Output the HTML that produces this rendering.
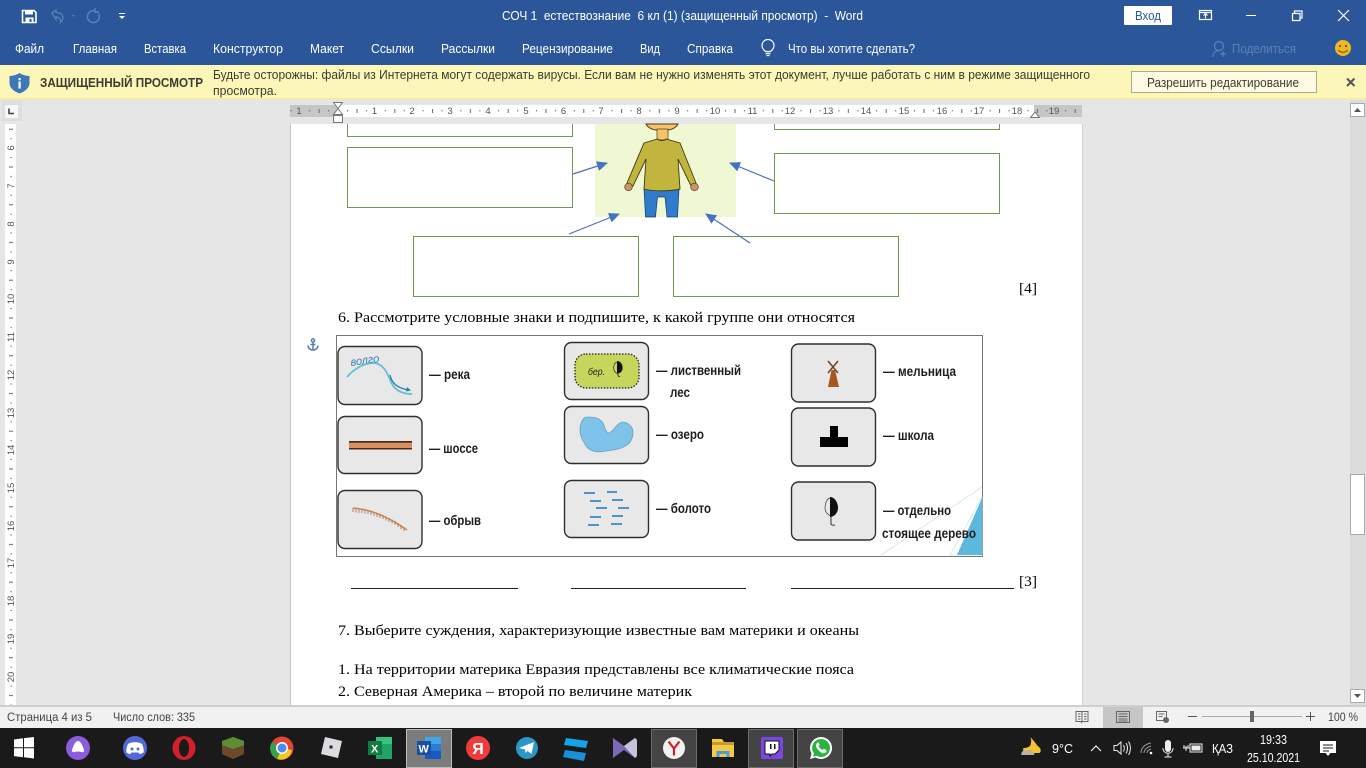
<!DOCTYPE html>
<html lang="ru"><head><meta charset="utf-8"><title>Word</title>
<style>
html,body{margin:0;padding:0;width:1366px;height:768px;overflow:hidden;background:#e6e6e6}
svg{display:block;font-family:"Liberation Sans",sans-serif}
.u{font-size:12.5px;fill:#fff}
.s{font-family:"Liberation Serif",serif;font-size:15px;fill:#000}
.y{font-size:12.5px;fill:#3c3c30}
.r{font-size:9.5px;fill:#555;text-anchor:middle}
.b{font-size:14px;font-weight:bold;fill:#1d1d1d}
.st{font-size:11.5px;fill:#444}
.w{font-size:12.5px;fill:#fff}
.box{fill:#e8e8e8;stroke:#2f2f2f;stroke-width:1.4}
.g{fill:#fff;stroke:#6f9a4b;stroke-width:1}
.ic{fill:none;stroke:#fff;stroke-width:1.2}
</style></head><body>
<svg width="1366" height="768" viewBox="0 0 1366 768" xmlns="http://www.w3.org/2000/svg">
<defs>
<pattern id="hp" width="37.8" height="12" patternUnits="userSpaceOnUse" patternTransform="translate(338 105)">
<rect x="9" y="5" width="1" height="1.4" fill="#666"/><rect x="18.5" y="4" width="1" height="4" fill="#666"/><rect x="28" y="5" width="1" height="1.4" fill="#666"/>
</pattern>
<pattern id="vp" width="12" height="37.75" patternUnits="userSpaceOnUse" patternTransform="translate(5 148)">
<rect x="5.5" y="9" width="1.4" height="1" fill="#666"/><rect x="4" y="18.5" width="4" height="1" fill="#666"/><rect x="5.5" y="28" width="1.4" height="1" fill="#666"/>
</pattern>
<marker id="ah" markerWidth="12" markerHeight="10" refX="10" refY="5" orient="auto" markerUnits="userSpaceOnUse"><path d="M0 0L11 5L0 10Z" fill="#4472c4"/></marker>
</defs>

<!-- chrome -->
<rect width="1366" height="65" fill="#2b579a"/>
<rect y="65" width="1366" height="35" fill="#fcf7b8"/>
<rect y="98.5" width="1366" height="1" fill="#e6dfa9"/>
<rect y="100" width="1366" height="607" fill="#e6e6e6"/>

<!-- quick access -->
<path d="M22.5 10.5h11.5l2 2v10h-13.5z" fill="none" stroke="#fff" stroke-width="1.6"/><rect x="25" y="10.5" width="8" height="4" fill="#fff"/><rect x="25.5" y="17.5" width="8" height="5" fill="#fff"/><rect x="29.5" y="19" width="2" height="3" fill="#2b579a"/>
<path d="M52 13l4-3v2.5c4 0 7 2 7 5 0 2-1 3.5-2.5 5 .6-3-1-5.5-4.500-5.500v2.500z" fill="none" stroke="#5f80b4" stroke-width="1.3"/>
<path d="M72 15l3 0-1.5 2z" fill="#5f80b4"/>
<path d="M98.5 13.500a6 6 0 1 1-3-2.500M95 8v4h4" fill="none" stroke="#5f80b4" stroke-width="1.5"/>
<rect x="119" y="13" width="6" height="1" fill="#fff"/><path d="M119 16h6l-3 3z" fill="#fff"/>

<text x="502" y="20" class="u" style="white-space:pre" textLength="361" lengthAdjust="spacingAndGlyphs">СОЧ 1  естествознание  6 кл (1) (защищенный просмотр)  -  Word</text>
<rect x="1124" y="6" width="48" height="19" rx="1" fill="#fff"/>
<text x="1135" y="20" class="u" style="fill:#2b579a" textLength="26" lengthAdjust="spacingAndGlyphs">Вход</text>
<rect x="1199.5" y="10.5" width="12" height="9" class="ic"/><path d="M1199.5 12.5h12M1205.5 18.5v-5M1203.5 15.5l2-2 2 2" class="ic" stroke-width="1"/>
<rect x="1246" y="15" width="10" height="1" fill="#fff"/>
<path d="M1292.5 13.5h7.5v7h-7.5zM1294.5 13.5v-2.5h7.5v7h-2" class="ic"/>
<path d="M1338 10l11 11M1349 10l-11 11" class="ic" stroke-width="1.3"/>

<!-- tabs -->
<text x="15" y="53" class="u" textLength="29" lengthAdjust="spacingAndGlyphs">Файл</text>
<text x="73" y="53" class="u" textLength="44" lengthAdjust="spacingAndGlyphs">Главная</text>
<text x="144" y="53" class="u" textLength="42" lengthAdjust="spacingAndGlyphs">Вставка</text>
<text x="213" y="53" class="u" textLength="70" lengthAdjust="spacingAndGlyphs">Конструктор</text>
<text x="310" y="53" class="u" textLength="34" lengthAdjust="spacingAndGlyphs">Макет</text>
<text x="371" y="53" class="u" textLength="43" lengthAdjust="spacingAndGlyphs">Ссылки</text>
<text x="441" y="53" class="u" textLength="54" lengthAdjust="spacingAndGlyphs">Рассылки</text>
<text x="522" y="53" class="u" textLength="91" lengthAdjust="spacingAndGlyphs">Рецензирование</text>
<text x="640" y="53" class="u" textLength="20" lengthAdjust="spacingAndGlyphs">Вид</text>
<text x="687" y="53" class="u" textLength="46" lengthAdjust="spacingAndGlyphs">Справка</text>
<path d="M765.5 51.5c-2.500-2-3.500-4-3.500-6a6 6 0 0 1 12 0c0 2-1 4-3.500 6zM765.5 53.500h5M766.5 55.500h3" fill="none" stroke="#fff" stroke-width="1.2"/>
<text x="788" y="53" class="u" textLength="127" lengthAdjust="spacingAndGlyphs">Что вы хотите сделать?</text>
<g fill="none" stroke="#5f80b4" stroke-width="1.2"><circle cx="1219" cy="46" r="4.5"/><path d="M1212.5 57c.5-4 3-6 6-6.5M1220 54h6M1223 51v6"/></g>
<text x="1232" y="53" class="u" style="fill:#5f80b4" textLength="64" lengthAdjust="spacingAndGlyphs">Поделиться</text>
<circle cx="1343" cy="48" r="8" fill="#eeb91f"/><circle cx="1340" cy="46" r="1.1" fill="#6b4f0a"/><circle cx="1346" cy="46" r="1.1" fill="#6b4f0a"/><path d="M1338.5 50c1.5 3 7.5 3 9 0" fill="none" stroke="#6b4f0a"/>

<!-- protected view bar -->
<path d="M19.5 73c3 2 6 2.8 10 3v7c0 5-4.5 8.5-10 10.5-5.5-2-10-5.5-10-10.5v-7c4-.2 7-1 10-3z" fill="#3f78b8"/>
<rect x="18.5" y="78" width="2.2" height="2.2" fill="#fff"/><rect x="18.5" y="81.5" width="2.2" height="7" fill="#fff"/>
<text x="40" y="87" class="y" style="font-weight:bold" textLength="163" lengthAdjust="spacingAndGlyphs">ЗАЩИЩЕННЫЙ ПРОСМОТР</text>
<text x="213" y="79" class="y" textLength="877" lengthAdjust="spacingAndGlyphs">Будьте осторожны: файлы из Интернета могут содержать вирусы. Если вам не нужно изменять этот документ, лучше работать с ним в режиме защищенного</text>
<text x="213" y="95" class="y" textLength="64" lengthAdjust="spacingAndGlyphs">просмотра.</text>
<rect x="1131.5" y="71.5" width="185" height="21" fill="#fdfbe2" stroke="#b0ab86"/>
<text x="1147" y="87" class="y" textLength="152" lengthAdjust="spacingAndGlyphs">Разрешить редактирование</text>
<path d="M1347 78.5l7.500 7.500M1354.500 78.500l-7.500 7.500" fill="none" stroke="#555" stroke-width="2"/>

<!-- rulers -->
<rect x="2" y="100" width="20" height="21" fill="#dedede"/>
<rect x="5" y="105" width="13" height="13" fill="#f7f7f7"/><path d="M9 108.5v5h5" fill="none" stroke="#444" stroke-width="1.6"/>
<rect x="290" y="105" width="792" height="12" fill="#fff"/>
<rect x="290" y="105" width="48" height="12" fill="#c6c6c6"/>
<rect x="1034" y="105" width="48" height="12" fill="#c6c6c6"/>
<rect x="290" y="105" width="792" height="12" fill="url(#hp)"/>
<g>
<text x="299" y="114" class="r">1</text><text x="374.5" y="114" class="r">1</text><text x="412" y="114" class="r">2</text><text x="450" y="114" class="r">3</text><text x="488" y="114" class="r">4</text><text x="526" y="114" class="r">5</text><text x="563.5" y="114" class="r">6</text><text x="601" y="114" class="r">7</text><text x="639" y="114" class="r">8</text><text x="677" y="114" class="r">9</text><text x="715" y="114" class="r">10</text><text x="752.5" y="114" class="r">11</text><text x="790" y="114" class="r">12</text><text x="828" y="114" class="r">13</text><text x="866" y="114" class="r">14</text><text x="904" y="114" class="r">15</text><text x="942" y="114" class="r">16</text><text x="979" y="114" class="r">17</text><text x="1017" y="114" class="r">18</text><text x="1054" y="114" class="r">19</text>
</g>
<path d="M333.5 102.5h9l-4.5 6 4.5 6h-9l4.5-6z" fill="#fff" stroke="#777"/>
<rect x="333.5" y="115.5" width="9" height="7" fill="#fff" stroke="#777"/>
<path d="M1030.5 117.5l4.5-5.5 4.5 5.5z" fill="#fff" stroke="#777"/>

<rect x="5" y="124" width="11" height="582" fill="#fff"/>
<rect x="5" y="124" width="11" height="582" fill="url(#vp)"/>
<g font-size="9.5" fill="#555" text-anchor="middle">
<text transform="translate(14 148) rotate(-90)">6</text><text transform="translate(14 186) rotate(-90)">7</text><text transform="translate(14 224) rotate(-90)">8</text><text transform="translate(14 262) rotate(-90)">9</text><text transform="translate(14 299) rotate(-90)">10</text><text transform="translate(14 337) rotate(-90)">11</text><text transform="translate(14 375) rotate(-90)">12</text><text transform="translate(14 413) rotate(-90)">13</text><text transform="translate(14 450) rotate(-90)">14</text><text transform="translate(14 488) rotate(-90)">15</text><text transform="translate(14 526) rotate(-90)">16</text><text transform="translate(14 563) rotate(-90)">17</text><text transform="translate(14 601) rotate(-90)">18</text><text transform="translate(14 639) rotate(-90)">19</text><text transform="translate(14 677) rotate(-90)">20</text>
</g>

<!-- page -->
<rect x="290" y="124" width="1" height="583" fill="#c4c4c4"/>
<rect x="291" y="124" width="791" height="583" fill="#fff"/>
<rect x="1082" y="124" width="1" height="583" fill="#d0d0d0"/>

<!-- figure -->
<path d="M347.5 124v12.5h225V124" fill="none" stroke="#6f9a4b"/>
<rect x="347.5" y="147.5" width="225" height="60" class="g"/>
<path d="M774.5 124v5.5h225V124" fill="none" stroke="#6f9a4b"/>
<rect x="774.5" y="153.5" width="225" height="60" class="g"/>
<rect x="413.5" y="236.5" width="225" height="60" class="g"/>
<rect x="673.5" y="236.5" width="225" height="60" class="g"/>
<rect x="595" y="124" width="141" height="93" fill="#eff8d2"/>
<path d="M646 124c2 4 7 6.5 16 6.5s14-2.5 16-6.5z" fill="#f6c36c" stroke="#4a3a1a"/>
<rect x="657" y="129" width="11" height="11" fill="#f6c36c" stroke="#4a3a1a" stroke-width=".7"/>
<path d="M644 189h35l-1.5 28h-10.500l-2-20h-7.500l-2 20h-10z" fill="#2f7ccd" stroke="#1d3b66" stroke-width=".7"/>
<path d="M657.5 139l-13.500 4-17 40 6 3 13-27-2 30c10 2.500 25 2.500 36 0l-2-30 13 27 5-3-16-40-14-4c-2 2-6 2-8.500 0z" fill="#c2b53e" stroke="#3c3a18" stroke-width=".9"/>
<circle cx="628.5" cy="187" r="3.8" fill="#c6966a" stroke="#4a3a1a" stroke-width=".7"/>
<circle cx="694.5" cy="187" r="3.8" fill="#c6966a" stroke="#4a3a1a" stroke-width=".7"/>
<g stroke="#4a70b8" stroke-width="1.2" fill="none">
<path d="M573 174L607 163" marker-end="url(#ah)"/>
<path d="M774 181L730 163" marker-end="url(#ah)"/>
<path d="M569 234L619 214" marker-end="url(#ah)"/>
<path d="M750 243L706 214" marker-end="url(#ah)"/>
</g>

<!-- document text -->
<text x="1019" y="293" class="s" textLength="18" lengthAdjust="spacingAndGlyphs">[4]</text>
<text x="338" y="322" class="s" textLength="517" lengthAdjust="spacingAndGlyphs">6. Рассмотрите условные знаки и подпишите, к какой группе они относятся</text>

<!-- anchor -->
<g fill="none" stroke="#4f7db5" stroke-width="1.5"><circle cx="313" cy="340.5" r="1.6"/><path d="M313 342.5v7.5M310.5 344.5h5M308 345.5c.3 3 2.5 4.5 5 4.5s4.7-1.5 5-4.5"/></g>

<!-- legend image -->
<rect x="336.5" y="335.5" width="646" height="221" fill="#fff" stroke="#777"/>
<path d="M881 555L982 487M982 497L950 555H982Z" fill="none" stroke="#d5e4e4" stroke-width=".8"/>
<path d="M982 498L957 555H982Z" fill="#5cb9dd"/>

<rect x="338" y="346.5" width="84" height="58" rx="7" class="box"/>
<rect x="338" y="416.5" width="84" height="57" rx="7" class="box"/>
<rect x="338" y="490.5" width="84" height="58" rx="7" class="box"/>
<rect x="564.5" y="342.5" width="84" height="57" rx="7" class="box"/>
<rect x="564.5" y="406.5" width="84" height="57" rx="7" class="box"/>
<rect x="564.5" y="480.5" width="84" height="57" rx="7" class="box"/>
<rect x="791.5" y="344" width="84" height="58" rx="7" class="box"/>
<rect x="791.5" y="408" width="84" height="58" rx="7" class="box"/>
<rect x="791.5" y="482" width="84" height="58" rx="7" class="box"/>

<!-- river -->
<path d="M347 377C353 370 363 363 373 363C383 363 387 372 391 382C395 391 403 394 412 394" fill="none" stroke="#62bdd8" stroke-width="1.8"/>
<path d="M390 375C392 384 398 388 408 390" fill="none" stroke="#2a7fa8" stroke-width="1.4"/><path d="M407 387l4 3.500-5 1z" fill="#2a7fa8"/>
<text transform="translate(351 366) rotate(-8)" font-size="11.5" font-style="italic" fill="#3d7fb5" textLength="29" lengthAdjust="spacingAndGlyphs">волго</text>
<!-- road -->
<rect x="349" y="442" width="63" height="7" fill="#d99060"/>
<rect x="349" y="441" width="63" height="1.7" fill="#4a2a18"/><rect x="349" y="448" width="63" height="1.5" fill="#4a2a18"/>
<!-- cliff -->
<path d="M353 508c15 1 33 7 54 22" fill="none" stroke="#d08a5c" stroke-width="1.5"/>
<path d="M353 508v4M356 508.5v4M359 509v4M362 509v4M365 509.500v4M368 510v4M371 511v4M374 512v4M377 513v4M380 514v4M383 515v4M386 516.500v4M389 518v4M392 519.500v4M395 521v4M398 523v4M401 525v4M404 527v4" stroke="#a06a48" stroke-width=".8"/>
<!-- forest -->
<rect x="575" y="354" width="64" height="34" rx="11" fill="#c6d65c" stroke="#222" stroke-width="1.3" stroke-dasharray="1.5 1.5"/>
<text x="588" y="375" font-size="10" font-style="italic" fill="#222" textLength="17" lengthAdjust="spacingAndGlyphs">бер.</text>
<path d="M617 362c-3 1-4 5-3 8 .5 2 2 3 3.500 3.500" fill="none" stroke="#333" stroke-width=".7"/><path d="M617 361c4 0 6 4 5.500 8-.4 3-3 4.500-5.500 4.500z" fill="#111"/><path d="M618 373v2c0 1 1 1.500 2 1.500" fill="none" stroke="#333"/>
<!-- lake -->
<path d="M580 430C580 423 583 417 587 417C594 417 600 418 603 423C605 428 606 433 609 433C613 432 617 423 622 422C628 422 633 427 633 432C633 438 631 442 627 445C622 449 614 450 606 451C597 453 590 451 586 446C583 441 580 436 580 430Z" fill="#7ec3ea" stroke="#6f9fb8" stroke-width=".8"/>
<!-- swamp -->
<g stroke="#3d86c2" stroke-width="1.8"><path d="M584 493h11M607 492h10M590 501h11M612 500h11M596 508h11M618 508h11M590 517h11M612 516h11M588 525h11M611 524h11"/></g>
<!-- mill -->
<path d="M828 387l3.500-17h3.500l4 17z" fill="#a8561f"/><path d="M828 361l10 12M838 361l-10 12" stroke="#6b4426" stroke-width="1.5"/>
<!-- school -->
<path d="M830 426h8v11h10v10h-28v-10h10z" fill="#000"/>
<!-- tree -->
<path d="M830 498c-3.500 1-5 6-5 10 0 4 3 7 6 8" fill="none" stroke="#333" stroke-width=".7"/><path d="M830 497c5 0 8 6 8 11 0 5-4 9-8 9z" fill="#111"/><path d="M831 517v7c0 1 2 1.500 4 1" fill="none" stroke="#333"/>

<text x="429" y="379" class="b" textLength="41" lengthAdjust="spacingAndGlyphs">— река</text>
<text x="429" y="453" class="b" textLength="49" lengthAdjust="spacingAndGlyphs">— шоссе</text>
<text x="429" y="525" class="b" textLength="52" lengthAdjust="spacingAndGlyphs">— обрыв</text>
<text x="656" y="375" class="b" textLength="85" lengthAdjust="spacingAndGlyphs">— лиственный</text>
<text x="670" y="397" class="b" textLength="20" lengthAdjust="spacingAndGlyphs">лес</text>
<text x="656" y="439" class="b" textLength="48" lengthAdjust="spacingAndGlyphs">— озеро</text>
<text x="656" y="513" class="b" textLength="55" lengthAdjust="spacingAndGlyphs">— болото</text>
<text x="883" y="376" class="b" textLength="73" lengthAdjust="spacingAndGlyphs">— мельница</text>
<text x="883" y="440" class="b" textLength="51" lengthAdjust="spacingAndGlyphs">— школа</text>
<text x="883" y="515" class="b" textLength="68" lengthAdjust="spacingAndGlyphs">— отдельно</text>
<text x="882" y="538" class="b" textLength="94" lengthAdjust="spacingAndGlyphs">стоящее дерево</text>

<rect x="351" y="588" width="167" height="1" fill="#222"/>
<rect x="571" y="588" width="175" height="1" fill="#222"/>
<rect x="791" y="588" width="223" height="1" fill="#222"/>
<text x="1019" y="586" class="s" textLength="18" lengthAdjust="spacingAndGlyphs">[3]</text>
<text x="338" y="635" class="s" textLength="521" lengthAdjust="spacingAndGlyphs">7. Выберите суждения, характеризующие известные вам материки и океаны</text>
<text x="338" y="674" class="s" textLength="516" lengthAdjust="spacingAndGlyphs">1. На территории материка Евразия представлены все климатические пояса</text>
<text x="338" y="696" class="s" textLength="354" lengthAdjust="spacingAndGlyphs">2. Северная Америка – второй по величине материк</text>

<!-- scrollbar -->
<rect x="1350" y="100" width="16" height="607" fill="#dcdcdc"/>
<rect x="1350.5" y="103.5" width="14" height="13" fill="#fff" stroke="#aaa"/><path d="M1354 112l3.5-4 3.5 4z" fill="#555"/>
<rect x="1350.5" y="474.5" width="14" height="60" fill="#fff" stroke="#aaa"/>
<rect x="1350.5" y="689.5" width="14" height="13" fill="#fff" stroke="#aaa"/><path d="M1354 694l3.5 4 3.5-4z" fill="#555"/>

<!-- status -->
<rect y="705" width="1366" height="2" fill="#cfcfcf"/>
<rect y="707" width="1366" height="21" fill="#f1f1f1"/>
<text x="7" y="721" class="st" textLength="85" lengthAdjust="spacingAndGlyphs">Страница 4 из 5</text>
<text x="113" y="721" class="st" textLength="82" lengthAdjust="spacingAndGlyphs">Число слов: 335</text>
<path d="M1076 711.5h5.5l.5 1 .5-1h5.5v10h-6l-.5 1-.5-1h-5zM1082 712.5v9M1078 714h2.5M1078 716.5h2.5M1078 719h2.5M1084 714h2.5M1084 716.5h2.5M1084 719h2.5" fill="none" stroke="#666"/>
<rect x="1103" y="707" width="40" height="21" fill="#c6c6c6"/>
<path d="M1116.5 711.5h13v11h-13zM1118.5 714h9M1118.5 716.5h9M1118.5 719h9M1118.5 721h9" fill="none" stroke="#666"/>
<path d="M1156.5 711.5h10v9h-10zM1158.5 714h6M1158.5 716.5h4" fill="none" stroke="#666"/><circle cx="1166" cy="720" r="3" fill="#666"/>
<rect x="1188" y="716" width="9" height="1" fill="#555"/>
<rect x="1202" y="716" width="100" height="1" fill="#aaa"/>
<rect x="1250" y="711" width="4" height="11" fill="#666"/>
<path d="M1306 716.5h9M1310.5 712v9" stroke="#555"/>
<text x="1328" y="721" class="st" textLength="30" lengthAdjust="spacingAndGlyphs">100 %</text>

<!-- taskbar -->
<rect y="728" width="1366" height="40" fill="#1a1a1a"/>
<path d="M14 739.5l9-1.200v9h-9zM24 738.100l10-1.100v10.300H24zM14 748.300h9v9l-9-1.200zM24 748.300h10V758.500l-10-1.300z" fill="#fff"/>
<circle cx="78" cy="748" r="12" fill="#8b5ddb"/><path d="M78 741c3 0 5 6 6 9 .5 2-1.500 2.500-3 2-2-.6-4-.6-6 0-1.500.5-3.500 0-3-2 1-3 3-9 6-9z" fill="#fff"/>
<circle cx="135" cy="748" r="12" fill="#5468d8"/><path d="M128 744c4-2.500 10-2.500 14 0 1.500 3 2 6 1.500 8.500-1.500 1-3 1.500-4 1.500l-1-1.500h-7l-1 1.500c-1 0-2.500-.5-4-1.500-.5-2.500 0-5.500 1.500-8.500z" fill="#fff"/><circle cx="132" cy="749" r="1.500" fill="#5468d8"/><circle cx="138" cy="749" r="1.500" fill="#5468d8"/>
<ellipse cx="184" cy="748" rx="11.5" ry="12" fill="#d11f2c"/><ellipse cx="184" cy="748" rx="5" ry="9" fill="#1a1a1a"/>
<path d="M233 737l11 4v13l-11 5-11-5v-13z" fill="#6b4a2c"/><path d="M233 737l11 4v4l-11 4-11-4v-4z" fill="#5c8f35"/>
<circle cx="282" cy="748" r="11.5" fill="#dd4535"/><path d="M282 748l10 2a11 11 0 0 1-15 9z" fill="#f6c520"/><path d="M272 742a11.500 11.500 0 0 0 5 17l5-11z" fill="#37a04c"/><circle cx="282" cy="748" r="6" fill="#fff"/><circle cx="282" cy="748" r="4.500" fill="#4d8bf0"/>
<path d="M325 737l17 4-4 17-17-4z" fill="#dadce0"/><rect x="329.500" y="745.500" width="3" height="3" fill="#222"/>
<rect x="376" y="737" width="16" height="22" fill="#21a366"/><rect x="376" y="737" width="16" height="7" fill="#33c481"/><rect x="368" y="741" width="14" height="14" fill="#107c41"/>
<text x="371" y="752.500" font-size="11" font-weight="bold" fill="#fff">X</text>
<rect x="406.5" y="729.5" width="45" height="38" fill="#7c7c7c" stroke="#bdbdbd"/>
<rect x="425" y="737" width="16" height="22" fill="#185abd"/><rect x="425" y="737" width="16" height="7" fill="#41a5ee"/><rect x="425" y="744" width="16" height="7" fill="#2b7cd3"/><rect x="417" y="741" width="14" height="14" fill="#1a4fa8"/>
<text x="418.5" y="752.5" font-size="11" font-weight="bold" fill="#fff">W</text>
<circle cx="478" cy="748" r="12" fill="#f03b3b"/><text x="478" y="754" font-size="16" font-weight="bold" fill="#fff" text-anchor="middle">Я</text>
<circle cx="527" cy="748" r="11" fill="#2b97c9"/><path d="M519 748l15-6-2.500 12-4-3-2 2-.5-3.500z" fill="#fff"/>
<path d="M566 738l22 3-2 7-22-3z" fill="#12a4e6"/><path d="M565 750l21 3-2 8-21-4z" fill="#1a8fd8"/>
<path d="M613 738l11 8 11-8 2 2v16l-2 2-11-8-11 8z" fill="#7a6ab8"/><path d="M624 746l11-8 2 2v16l-2 2z" fill="#c6c2de"/>
<rect x="651.5" y="729.5" width="45" height="38" fill="#444" stroke="#6c6c6c"/>
<circle cx="674" cy="748" r="11" fill="#f2f2f2"/><path d="M668.500 741.500l5.500 7 5.500-7M674 748.500v7" fill="none" stroke="#c8202c" stroke-width="2.2"/>
<path d="M712 739h10l2 3h10v15h-22z" fill="#f3c94a"/><rect x="712" y="742" width="22" height="3" fill="#c79a2e"/><path d="M716.500 757v-6h13v6h-3v-3h-7v3z" fill="#4a9bd8"/>
<rect x="748.5" y="729.5" width="45" height="38" fill="#444" stroke="#6c6c6c"/>
<rect x="761" y="737" width="22" height="22" rx="2" fill="#7c46e0"/><path d="M765 741h14v9l-4 4h-3l-2 2v-2h-5z" fill="#fff" stroke="#111"/><rect x="770" y="744" width="1.5" height="5" fill="#111"/><rect x="774" y="744" width="1.5" height="5" fill="#111"/>
<rect x="797.5" y="729.5" width="45" height="38" fill="#444" stroke="#6c6c6c"/>
<path d="M821 737a11 11 0 1 1-5.500 20.500L810 759l1.500-5.500A11 11 0 0 1 821 737z" fill="#fff"/><path d="M821 739a9 9 0 1 1-4.500 16.800l-3.500 1 1-3.300A9 9 0 0 1 821 739z" fill="#2ab340"/><path d="M817 743c-1 1-1.500 2.500-.5 4.500 1 2 3.500 4.500 5.500 5.500 2 .8 3.500 0 4.500-1.500l-.2-1.500-2.500-1.300-1.200 1.300c-1.500-.5-3.500-2.500-4-4l1-1.200-1.200-2.500z" fill="#fff"/>

<!-- tray -->
<path d="M1030 737c4 3 6 8 10 11 1 2 1 4-.5 5h-13c-3-1-4-3-3-5 3 0 6-1 7-3 1-3 1-6-.5-8z" fill="#f4c430"/>
<path d="M1022 752c1-2 3-2 4-1 2-2 6-1 6 1 2 0 3 1 2 3h-12c-1 0-1-2 0-3z" fill="#b9b2a4"/>
<text x="1052" y="753" class="w" textLength="21" lengthAdjust="spacingAndGlyphs">9°C</text>
<path d="M1091 751l5-5 5 5" fill="none" stroke="#eee" stroke-width="1.2"/>
<path d="M1114 745.500h3l4-3.500v12l-4-3.500h-3zM1123.500 745c1 2 1 4.500 0 6.500M1126 743c2 3 2 7.500 0 10.500M1128.500 741.500c2.500 4 2.500 9.500 0 13.500" fill="none" stroke="#eee"/>
<path d="M1141 753c0-5 4-9 10-10M1144 753c0-3 3-6 7-7M1147 753c0-1.500 1-3 4-4" fill="none" stroke="#999"/><circle cx="1151" cy="753" r="1.3" fill="#fff"/>
<rect x="1165" y="740" width="6" height="12" rx="3" fill="#eee"/><path d="M1163 748c0 7 10 7 10 0M1168 753v4M1164.500 757h7" fill="none" stroke="#eee"/>
<rect x="1190" y="744" width="12" height="8" fill="none" stroke="#eee"/><rect x="1191.5" y="745.5" width="9" height="5" fill="#eee"/><path d="M1186 746v5M1183 748h7M1184 745v3M1188 745v3" stroke="#eee"/>
<text x="1212" y="753" class="w" textLength="21" lengthAdjust="spacingAndGlyphs">ҚАЗ</text>
<text x="1260" y="744" class="w" textLength="27" lengthAdjust="spacingAndGlyphs">19:33</text>
<text x="1247" y="762" class="w" textLength="53" lengthAdjust="spacingAndGlyphs">25.10.2021</text>
<path d="M1320 741h16v12h-5.500l-2.500 3-2.500-3H1320z" fill="#fff"/><path d="M1323 745h10M1323 748h10M1323 751h6" stroke="#1a1a1a"/>
</svg>
</body></html>
